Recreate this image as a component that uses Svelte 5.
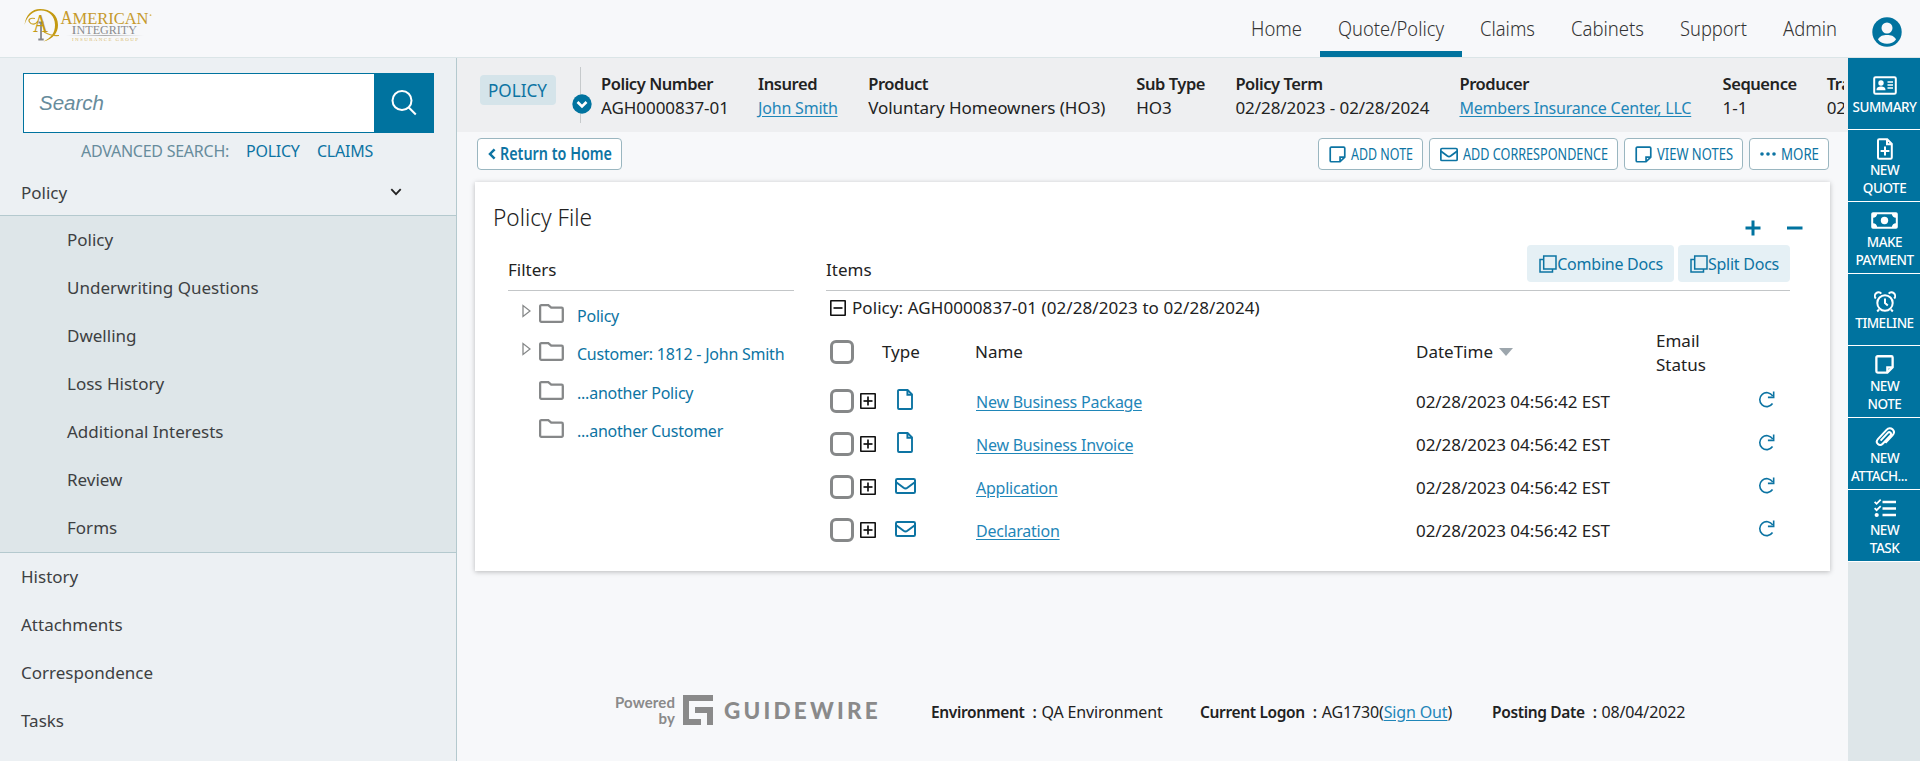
<script>
  const nav = [
    { label: 'Home', width: 51 },
    { label: 'Quote/Policy', width: 106 },
    { label: 'Claims', width: 55 },
    { label: 'Cabinets', width: 73 },
    { label: 'Support', width: 67 },
    { label: 'Admin', width: 54 }
  ];
  const subMenu = ['Policy', 'Underwriting Questions', 'Dwelling', 'Loss History', 'Additional Interests', 'Review', 'Forms'];
  const menu = ['History', 'Attachments', 'Correspondence', 'Tasks'];
  const facts = [
    { label: 'Policy Number', value: 'AGH0000837-01', width: 127 },
    { label: 'Insured', value: 'John Smith', link: true, width: 80 },
    { label: 'Product', value: 'Voluntary Homeowners (HO3)', width: 238 },
    { label: 'Sub Type', value: 'HO3', width: 69 },
    { label: 'Policy Term', value: '02/28/2023 - 02/28/2024', width: 194 },
    { label: 'Producer', value: 'Members Insurance Center, LLC', link: true, width: 233 },
    { label: 'Sequence', value: '1-1', width: 74 },
    { label: 'Transaction', value: '02/28/2023', width: 90 }
  ];
  const actions = [
    { label: 'ADD NOTE', icon: 'note', width: 62 },
    { label: 'ADD CORRESPONDENCE', icon: 'mail', width: 145 },
    { label: 'VIEW NOTES', icon: 'note', width: 76 },
    { label: 'MORE', icon: 'dots', width: 38 }
  ];
  const filters = [
    { label: 'Policy', open: true },
    { label: 'Customer: 1812 - John Smith', open: true },
    { label: '...another Policy' },
    { label: '...another Customer' }
  ];
  const docs = [
    { name: 'New Business Package', icon: 'doc' },
    { name: 'New Business Invoice', icon: 'doc' },
    { name: 'Application', icon: 'mail' },
    { name: 'Declaration', icon: 'mail' }
  ];
  const tools = [
    { icon: 'card', lines: ['SUMMARY'] },
    { icon: 'docplus', lines: ['NEW', 'QUOTE'] },
    { icon: 'money', lines: ['MAKE', 'PAYMENT'] },
    { icon: 'clock', lines: ['TIMELINE'] },
    { icon: 'note', lines: ['NEW', 'NOTE'] },
    { icon: 'clip', lines: ['NEW', 'ATTACH...'] },
    { icon: 'tasks', lines: ['NEW', 'TASK'] }
  ];
</script>

{#snippet fit(label, width)}
  <svg class="fit" {width} height="28"><text x="0" y="20" textLength={width} lengthAdjust="spacingAndGlyphs">{label}</text></svg>
{/snippet}

{#snippet icon(name)}
  {#if name === 'note'}
    <svg class="i-note" viewBox="0 0 18 18"><path d="M2.5 1.2h13a1.2 1.2 0 0 1 1.2 1.2v9.300l-5 5H2.500a1.200 1.200 0 0 1-1.200-1.200V2.400a1.200 1.200 0 0 1 1.200-1.200zM16.500 11.700h-4.800v4.800" /></svg>
  {:else if name === 'mail'}
    <svg class="i-mail" viewBox="0 0 21 16"><rect x="1" y="1" width="19" height="14" rx="1.3" /><path d="M1.200 4.200l7.400 5.600c1.300.9 2.500.9 3.800 0l7.400-5.600" /></svg>
  {:else if name === 'dots'}
    <svg class="i-dots" viewBox="0 0 16 4"><g class="solid"><circle cx="2" cy="2" r="1.800" /><circle cx="8" cy="2" r="1.800" /><circle cx="14" cy="2" r="1.800" /></g></svg>
  {:else if name === 'doc'}
    <svg class="i-doc" viewBox="0 0 16 21"><path d="M2 1h8.600L15 5.400V19a1 1 0 0 1-1 1H2a1 1 0 0 1-1-1V2a1 1 0 0 1 1-1zM10.400 1v4.800H15" /></svg>
  {:else if name === 'docplus'}
    <svg class="i-docplus" viewBox="0 0 16 22"><path d="M2.200 1.200h8L14.800 6v13.600a1.200 1.200 0 0 1-1.200 1.200H2.200A1.200 1.200 0 0 1 1 19.600V2.400a1.200 1.200 0 0 1 1.200-1.200zM10 1.200V6.200h4.800M8 8.500v9M3.600 13h8.800" /></svg>
  {:else if name === 'card'}
    <svg class="i-card" viewBox="0 0 24 19"><rect x="1.200" y="1.200" width="21.600" height="16.600" rx="1.400" /><g class="solid"><circle cx="8" cy="7" r="2.700" /><path d="M3.500 14.200c0-3 2-3.700 4.500-3.700s4.500.7 4.500 3.700z" /></g><path class="thin" d="M14.500 6h5.500M14.500 9h5.500M14.500 12h5.500" /></svg>
  {:else if name === 'money'}
    <svg class="i-money" viewBox="0 0 27 17"><rect x="1.200" y="1.200" width="24.600" height="14.600" rx=".8" /><g class="solid"><circle cx="13.500" cy="8.500" r="3.700" /><path d="M2 2h4.200A4.500 4.500 0 0 1 2 5.800zM25 2h-4.200A4.500 4.500 0 0 0 25 5.800zM2 15h4.200A4.500 4.500 0 0 0 2 11.200zM25 15h-4.200a4.500 4.500 0 0 1 4.200-3.800z" /></g></svg>
  {:else if name === 'clock'}
    <svg class="i-clock" viewBox="0 0 22 22"><circle cx="11" cy="12" r="7.700" /><path d="M11 7.500V12l2.800 2.500M5 18.500l-1.800 2M17 18.500l1.800 2M1.800 7.500A3.200 3.200 0 0 1 7.300 2.600M20.200 7.500a3.200 3.200 0 0 0-5.500-4.900" /></svg>
  {:else if name === 'clip'}
    <svg class="i-clip" viewBox="0 0 20 22"><path d="M5.600 14.600l7.200-7.700c1.800-1.900 4.500.6 2.700 2.500l-7.800 8.300c-3.200 3.300-8-1-4.800-4.500l8.600-9.300c4-4.300 10 1 6 5.500l-7 7.500" /></svg>
  {:else if name === 'tasks'}
    <svg class="i-tasks" viewBox="0 0 22 19"><path d="M8.500 3H22M8.500 9.500H22M8.500 16H22" /><path class="mid" d="M.6 2.800l2 2L6.700.7M.6 9.200l2 2 4.100-4.100" /><circle class="solid" cx="2.700" cy="16" r="2.100" /></svg>
  {/if}
{/snippet}

{#snippet box(plus)}
  <svg class="toggle" viewBox="0 0 16 16"><rect x=".75" y=".75" width="14.500" height="14.500" rx=".8" /><path d="M3.500 8h9" />{#if plus}<path d="M8 3.500v9" />{/if}</svg>
{/snippet}

<div class="page">
  <header>
    <svg class="logo" viewBox="0 0 130 36">
      <defs>
        <linearGradient id="rule"><stop offset="0" stop-color="#bbb" stop-opacity="0" /><stop offset=".5" stop-color="#aaa" /><stop offset="1" stop-color="#bbb" stop-opacity="0" /></linearGradient>
      </defs>
      <path d="M.5 17C1.500 7 8 1 16 1c10.500 0 18 6 18 16 0 8-5 14-14.500 16.500C27 30 31 25 31 17c0-9-6-14.500-14-14.500C9 2.500 3 8 .5 17z" fill="#c49a12" />
      <path d="M11 10.500c-5-1-7 1-5.500 3.500S11 17.500 14 13M20 24c5 3 10 4 15 3.500" fill="none" stroke="#c9a227" stroke-width="1.200" />
      <path d="M17 14v17M14.300 31.500h5.400M14.500 14.500h5" fill="none" stroke="#85868a" stroke-width="1.800" />
      <text x="9" y="23.500" font-size="25" textLength="15" lengthAdjust="spacingAndGlyphs" fill="#c49a12">A</text>
      <text x="36.500" y="15.500" font-size="19.500" fill="#c69a2c" textLength="12" lengthAdjust="spacingAndGlyphs">A</text>
      <text x="48.500" y="15.500" font-size="16.500" fill="#c69a2c" textLength="76" lengthAdjust="spacingAndGlyphs">MERICAN</text>
      <text x="47.500" y="26" font-size="13.500" fill="#8b8c90" textLength="5" lengthAdjust="spacingAndGlyphs">I</text>
      <text x="52.500" y="26" font-size="12" fill="#8b8c90" textLength="60.500" lengthAdjust="spacingAndGlyphs">NTEGRITY</text>
      <rect x="42" y="27" width="78" height="1" fill="url(#rule)" />
      <text x="48" y="32.800" font-size="5" fill="#d8b968" textLength="66">INSURANCE GROUP</text>
      <circle cx="126.500" cy="7.200" r=".9" fill="#d8b968" />
    </svg>
    <nav>
      {#each nav as item}
        <a class:active={item.label === 'Quote/Policy'}>{@render fit(item.label, item.width)}</a>
      {/each}
      <svg class="user" viewBox="0 0 30 30"><circle cx="15" cy="15" r="14.700" fill="#00739f" /><circle cx="15" cy="11" r="5.500" fill="#f7f8fa" /><path d="M6 22.500c2-4 5-4.600 9-4.600s7 .6 9 4.600c-2.200 3-5.500 4.300-9 4.300s-6.800-1.300-9-4.300z" fill="#f7f8fa" /></svg>
    </nav>
  </header>

  <div class="body">
    <aside class="side">
      <div class="search">
        <span>Search</span>
        <button aria-label="Search"><svg viewBox="0 0 26 26"><circle cx="11" cy="10.500" r="9.500" /><path d="M17.800 17.500l7 7" /></svg></button>
      </div>
      <div class="advanced"><span>ADVANCED SEARCH:</span><a>POLICY</a><a>CLAIMS</a></div>
      <div class="item top"><span>Policy</span><svg viewBox="0 0 12 8"><path d="M1.300 1.200L6 6.200l4.700-5" /></svg></div>
      <div class="sub">
        {#each subMenu as item}<div class="item">{item}</div>{/each}
      </div>
      {#each menu as item}<div class="item">{item}</div>{/each}
    </aside>

    <main>
      <section class="summary">
        <span class="badge">{@render fit('POLICY', 59)}</span>
        <div class="divider"><svg viewBox="0 0 20 20"><circle cx="10" cy="10" r="9.700" fill="#00739f" /><path d="M5.500 8l4.500 4.500L14.500 8" fill="none" stroke="#fff" stroke-width="2.600" /></svg></div>
        <div class="facts">
          {#each facts as f}
            <div style="width: {f.width}px"><b>{f.label}</b>{#if f.link}<a>{f.value}</a>{:else}<span>{f.value}</span>{/if}</div>
          {/each}
        </div>
      </section>

      <section class="bar">
        <button class="return"><svg class="back" viewBox="0 0 8 12"><path d="M6.600 1.300L2 6l4.600 4.700" /></svg>{@render fit('Return to Home', 112)}</button>
        <div class="actions">
          {#each actions as a}<button>{@render icon(a.icon)}{@render fit(a.label, a.width)}</button>{/each}
        </div>
      </section>

      <section class="card">
        <div class="title"><h1>{@render fit('Policy File', 99)}</h1>
          <svg class="pm" viewBox="0 0 58 16"><path d="M8 .5v15M.5 8h15M42 8h15.500" /></svg>
        </div>
        <div class="cols">
          <div class="filters">
            <h2>Filters</h2>
            <div class="tree">
              {#each filters as f}
                <div class="node">
                  <svg class="arrow" viewBox="0 0 9 14">{#if f.open}<path d="M1 1.500v11L8 7z" />{/if}</svg>
                  <svg class="folder" viewBox="0 0 25 19"><path d="M2.300 1.200h7l2.900 2.500h10.400a1.200 1.200 0 0 1 1.200 1.200v11.700a1.200 1.200 0 0 1-1.200 1.200H2.300a1.200 1.200 0 0 1-1.200-1.200V2.400a1.200 1.200 0 0 1 1.200-1.200z" /></svg>
                  <a>{f.label}</a>
                </div>
              {/each}
            </div>
          </div>
          <div class="items">
            <div class="ihead"><h2>Items</h2>
              <div class="docs">
                {#each ['Combine Docs', 'Split Docs'] as label}
                  <button><svg viewBox="0 0 18 18"><path d="M4.700 1h12.300v13H4.700zM4.500 4.500H1V17h12.500v-3" /></svg><span>{label}</span></button>
                {/each}
              </div>
            </div>
            <div class="group">{@render box(false)}<span>Policy: AGH0000837-01 (02/28/2023 to 02/28/2024)</span></div>
            <div class="row thead">
              <i class="check"></i><span></span><span class="type">Type</span><span class="hname">Name</span>
              <span class="dt">DateTime<svg viewBox="0 0 14 8"><path d="M0 0h14L7 8z" /></svg></span>
              <span class="status">Email Status</span><span></span>
            </div>
            {#each docs as d}
              <div class="row">
                <i class="check"></i>
                {@render box(true)}
                <span class="ic">{@render icon(d.icon)}</span>
                <a>{d.name}</a>
                <span class="date">02/28/2023 04:56:42 EST</span>
                <span></span>
                <svg class="refresh" viewBox="0 0 18 18"><path d="M15.500 5.200A7.400 7.400 0 1 0 15.400 13.300M16.600 .5v6.200H10.500" /></svg>
              </div>
            {/each}
          </div>
        </div>
      </section>

      <footer>
        <div class="brand">
          <div class="powered">Powered<br />by</div>
          <svg class="g" viewBox="0 0 30 30"><path d="M0 0h30v6H6v18h12v6H0zM12 12h18v18h-6V18H12z" /></svg>
          <span class="gw">GUIDEWIRE</span>
        </div>
        <div class="env"><b>Environment</b><b>:</b><span>QA Environment</span></div>
        <div class="logon"><b>Current Logon</b><b>:</b><span>AG1730(<a>Sign Out</a>)</span></div>
        <div><b>Posting Date</b><b>:</b><span>08/04/2022</span></div>
      </footer>
    </main>

    <aside class="rail">
      {#each tools as t}
        <div class="tool"><div class="glyph">{@render icon(t.icon)}</div>{#each t.lines as l}<div class:clipped={l.endsWith('...')}>{l}</div>{/each}</div>
      {/each}
    </aside>
  </div>
</div>

<style>
  :global(body) { overflow: hidden; }
  * { box-sizing: border-box; }
  .page { height: 761px; display: flex; flex-direction: column; background: #f7f8fa; color: #222; font: 400 17px/24px 'Noto Sans', sans-serif; white-space: nowrap; }
  svg { display: block; flex: none; fill: none; stroke: currentColor; stroke-width: 2; }
  .fit { fill: currentColor; stroke: none; overflow: visible; }
  h1, h2 { margin: 0; }
  button { font: inherit; color: inherit; margin: 0; }
  a { color: #0d74a3; }
  .solid { fill: currentColor; stroke: none; }
  header { height: 58px; flex: none; border-bottom: 1px solid #dbe5e7; display: flex; justify-content: space-between; }
  .logo { width: 130px; height: 36px; margin: 8px 0 0 24px; stroke: none; font-family: 'Liberation Serif', serif; }
  nav { display: flex; padding-right: 18px; }
  nav a { height: 57px; padding: 16px 18px 0; font-size: 19.500px; font-weight: 300; color: #333; }
  nav a.active { border-bottom: 6px solid #00739f; }
  .user { width: 30px; height: 30px; margin: 17px 0 0 17px; stroke: none; }
  .body { flex: 1; min-height: 0; display: flex; }

  .side { width: 457px; flex: none; background: #ecf0f3; border-right: 1px solid #b4c9ce; padding-top: 15px; color: #3d4042; }
  .search { margin-left: 23px; width: 411px; height: 60px; background: #fff; border: 1px solid #00739f; display: flex; justify-content: space-between; align-items: center; }
  .search span { padding-left: 15px; font: italic 20.500px 'Liberation Sans', sans-serif; color: #678c9c; }
  .search button { width: 60px; height: 60px; margin-right: -1px; border: 0; padding: 0; background: #00739f; color: #fff; display: grid; place-items: center; }
  .search svg { width: 26px; height: 26px; }
  .advanced { display: flex; padding: 6px 0 0 81px; color: #678c9c; font-size: 16px; letter-spacing: -.25px; }
  .advanced span { width: 165px; }
  .advanced a { width: 71px; }
  .item { height: 48px; line-height: 47px; padding-left: 21px; }
  .top { display: flex; justify-content: space-between; align-items: center; margin-top: 5px; height: 47px; line-height: 46px; }
  .top span { padding-top: 2px; }
  .top svg { width: 12px; height: 8px; margin: 1px 54px 0 0; color: #222; stroke-width: 1.800; }
  .sub { border: solid #b4c9ce; border-width: 1px 0; background: #dee6e9; }
  .sub .item { padding-left: 67px; }

  main { flex: 1; min-width: 0; display: flex; flex-direction: column; }
  .summary { height: 74px; flex: none; background: #eeeff1; display: flex; padding-left: 23px; }
  .badge { margin-top: 17px; width: 76px; height: 30px; border-radius: 4px; background: #d5e4ea; color: #0d74a3; font-size: 18px; padding: 2px 0 0 8px; }
  .divider { width: 1px; height: 56px; margin: 9px 20px 0 24px; background: #c6cacc; }
  .divider svg { width: 20px; height: 20px; margin: 27px 0 0 -8px; stroke: none; }
  .facts { flex: 1; overflow: hidden; margin-right: 4px; display: flex; gap: 30.100px; padding-top: 14px; }
  .facts div { display: flex; flex-direction: column; flex: none; }
  .facts b { font-size: 16.500px; letter-spacing: -.45px; }
  .facts span { letter-spacing: -.05px; }
  b { font-weight: 600; }
  .facts a, .row a, footer a { text-decoration: underline; text-underline-offset: 2px; color: #1f86b8; }
  .facts a { font-size: 16px; letter-spacing: -.2px; }
  .bar { display: flex; justify-content: space-between; padding: 6px 19px 0 20px; height: 50px; flex: none; }
  .bar button { height: 32px; border: 1px solid #9ab6c0; border-radius: 4px; background: #fff; color: #0d74a3; display: flex; align-items: center; gap: 5px; padding: 0 9px 0 10px; font-size: 16.500px; }
  .bar .return { font-weight: 600; gap: 4px; font-size: 17px; }
  .back { width: 8px; height: 12px; stroke-width: 2.500; }
  .actions { display: flex; gap: 6px; }
  .i-note { width: 17px; height: 17px; stroke-width: 1.800; }
  .i-mail { width: 18px; height: 15px; stroke-width: 2; }
  .i-dots { width: 16px; height: 4px; }

  .card { margin: 0 18px; height: 389px; flex: none; background: #fff; box-shadow: 0 1px 5px rgba(0, 0, 0, .25); padding: 0 40px 0 33px; }
  .title { display: flex; justify-content: space-between; height: 63px; margin-left: -15px; margin-right: -13px; }
  h1 { font-size: 24px; font-weight: 300; padding-top: 24px; }
  .pm { width: 58px; height: 16px; margin-top: 38px; color: #00739f; stroke-width: 3; }
  .cols { display: flex; gap: 32px; }
  h2 { font-size: 17px; font-weight: 400; line-height: 50px; }
  .filters { width: 286px; }
  .filters h2, .ihead { height: 46px; border-bottom: 1px solid #c3c6c8; }
  .items { flex: 1; }
  .tree { padding-top: 6px; }
  .node { display: flex; height: 38.400px; align-items: flex-start; padding: 7px 0 0 14px; color: #868889; }
  .node a, .docs, .row a { font-size: 16px; letter-spacing: -.24px; }
  .arrow { width: 9px; height: 14px; stroke-width: 1.300; margin-right: 8px; }
  .folder { width: 25px; height: 19px; margin-right: 13px; stroke-width: 2.300; }
  .ihead { display: flex; justify-content: space-between; }
  .docs { display: flex; gap: 4px; }
  .docs button { letter-spacing: inherit; height: 37px; border: 0; border-radius: 4px; background: #e5f0f5; color: #0d74a3; padding: 0 11px 0 12px; display: flex; align-items: center; gap: 0; }
  .docs svg { width: 18px; height: 18px; stroke-width: 1.500; }
  .group { display: flex; align-items: center; gap: 6px; padding-left: 4px; height: 33px; letter-spacing: .07px; }
  .toggle { width: 16px; height: 16px; stroke-width: 1.700; color: #111; }
  .row { display: grid; grid-template-columns: 30px 20px 96px 440px 240px 102px 20px; align-items: center; height: 43px; padding-left: 4px; }
  .row .toggle { margin-bottom: 1px; }
  .thead { height: 56px; }
  .check { width: 24px; height: 24px; border: 3px solid #868889; border-radius: 6px; margin-bottom: 1px; }
  .type { padding-left: 2px; }
  .hname { margin-left: -1px; }
  .date { letter-spacing: -.05px; }
  .dt { display: flex; align-items: center; gap: 6px; }
  .dt svg { width: 14px; height: 8px; fill: #9da6ad; stroke: none; }
  .status { width: 54px; white-space: normal; padding-top: 1px; }
  .ic { padding: 0 0 4px 15px; color: #0d74a3; }
  .i-doc { width: 16px; height: 21px; margin-left: 2px; stroke-width: 1.900; }
  .ic :global(.i-mail) { width: 21px; height: 16px; }
  .refresh { width: 17px; height: 17px; margin-bottom: 4px; color: #0d74a3; stroke-width: 1.700; }

  footer { display: flex; align-items: center; height: 40px; margin-top: 121px; padding-left: 156px; font-size: 16px; letter-spacing: -.15px; }
  footer > div { display: flex; }
  footer b { margin-right: 8px; font-size: 15.500px; letter-spacing: -.35px; }
  footer b + b { margin-right: 5px; }
  .brand { align-items: center; color: #8a8a8a; width: 318px; margin-bottom: 5px; }
  .powered { width: 62px; text-align: right; font: 700 15px/16px Lato, sans-serif; letter-spacing: .1px; }
  .g { width: 30px; height: 30px; margin: 0 11px 0 8px; fill: #8a8a8a; stroke: none; }
  .gw { font: 900 22.500px Lato, sans-serif; letter-spacing: 3.200px; padding-top: 2px; }
  .env { width: 269px; }
  .logon { width: 292px; }

  .rail { width: 72px; flex: none; background: #dee6e9; color: #fff; }
  .tool { height: 72px; padding: 2px 0 0 1px; background: #00739f; border-bottom: 1px solid #fff; display: flex; flex-direction: column; align-items: center; justify-content: center; font-size: 13.500px; font-weight: 500; line-height: 18px; letter-spacing: -.5px; }
  .clipped { margin-right: 11px; }
  .glyph { height: 24px; display: grid; place-items: center; }
  .i-docplus { width: 16px; height: 22px; }
  .i-card { width: 24px; height: 19px; }
  .thin { stroke-width: 1.500; }
  .i-money { width: 27px; height: 17px; }
  .i-clock { width: 22px; height: 22px; }
  .i-clip { width: 20px; height: 22px; }
  .i-tasks { width: 22px; height: 19px; stroke-width: 2.600; }
  .mid { stroke-width: 1.800; }
  .rail :global(.i-note) { width: 19px; height: 19px; stroke-width: 2.200; }
</style>
